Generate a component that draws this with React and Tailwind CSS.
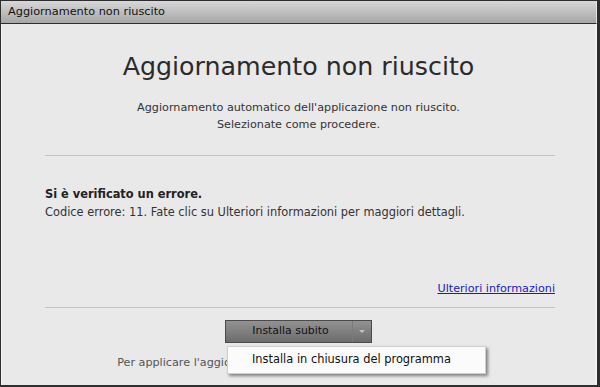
import React from "react";

export default function App() {
  return (
    <div className="w-[600px] h-[387px] flex flex-col bg-[#e9e9e9] border-t border-l border-r-[3px] border-b-2 border-[#2e2e2e] font-['DejaVu_Sans',sans-serif] overflow-hidden">
      <div className="h-[23px] shrink-0 flex items-center pl-[7px] bg-gradient-to-b from-[#d8d8d8] to-[#a6a6a6] border-b border-[#2e2e2e] border-r border-r-[#e6e6e6] text-[11.3px] text-[#111]">
        Aggiornamento non riuscito
      </div>
      <div className="flex-1 flex flex-col border-l border-l-[#f6f6f6] border-r-2 border-r-[#f2f2f2]">
        <div className="mt-[28px] text-center text-[25.3px] leading-[30px] text-[#2b2b2b]">
          Aggiornamento non riuscito
        </div>
        <div className="mt-[17px] text-center text-[11.2px] leading-[17px] text-[#333]">
          <div>Aggiornamento automatico dell'applicazione non riuscito.</div>
          <div>Selezionate come procedere.</div>
        </div>
        <div className="mt-[22px] ml-[43px] mr-[40px] h-px bg-[#c4c4c4]" />
        <div className="mt-[29px] pl-[43px] pr-[40px] text-[11.4px] leading-[18px] text-[#222]">
          <div className="font-bold">Si è verificato un errore.</div>
          <div className="text-[#333]">Codice errore: 11. Fate clic su Ulteriori informazioni per maggiori dettagli.</div>
        </div>
        <div className="mt-[59px] pl-[43px] pr-[40px] flex justify-end text-[11.2px] leading-[18px]">
          <span className="text-[#1a1ac4] underline">Ulteriori informazioni</span>
        </div>
        <div className="mt-[9px] ml-[43px] mr-[40px] h-px bg-[#c4c4c4]" />
        <div className="mt-[12px] flex justify-center">
          <div className="relative">
            <div className="w-[147px] h-[23px] flex border border-[#4a4a4a] bg-gradient-to-b from-[#929292] to-[#6c6c6c] text-[10.9px] text-[#111]">
              <div className="w-[126px] flex items-center justify-center pl-[3px]">Installa subito</div>
              <div className="flex-1 flex items-center justify-center border-l border-[#7a7a7a]">
                <svg width="6" height="4" viewBox="0 0 6 4">
                  <path d="M0 0 L6 0 L3 3 Z" fill="#c4c4c4" />
                </svg>
              </div>
            </div>
            <div className="absolute left-[2px] top-[26px] w-[259px] h-[28px] bg-[#fbfbfb] border border-[#d0d0d0] shadow-[2px_2px_3px_rgba(0,0,0,0.45)] flex items-center pl-[24px] text-[11.4px] text-[#111] z-10">
              Installa in chiusura del programma
            </div>
          </div>
        </div>
        <div className="mt-[11px] text-center text-[11.2px] leading-[18px] text-[#555]">
          Per applicare l'aggiornamento in seguito, riavviate l'applicazione
        </div>
      </div>
    </div>
  );
}
